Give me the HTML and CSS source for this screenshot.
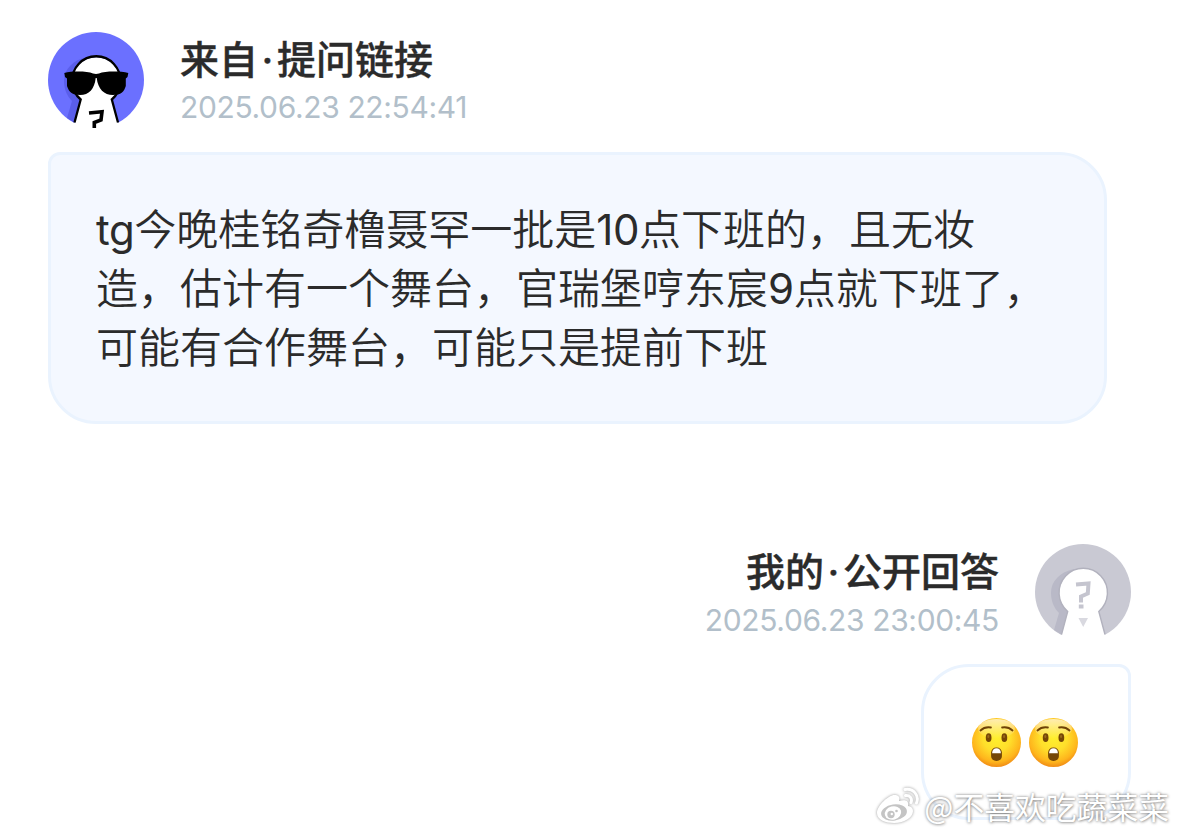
FILE: index.html
```html
<!DOCTYPE html>
<html lang="zh-CN">
<head>
    <meta charset="UTF-8">
    <meta name="viewport" content="width=device-width, initial-scale=1.0">
    <title>提问链接</title>
    <link rel="stylesheet" href="styles.css">
</head>
<body>
    <div class="page">
        <div class="message question">
            <div class="header">
                <svg class="avatar" viewBox="0 0 96 96">
                    <circle cx="48" cy="48" r="48" fill="#6b70ff"/>
                    <path d="M39 25C25 28 16 37 16 49C16 57 19 64 24 69L19 86L27 91L50 60Z" fill="#5a5eea"/>
                    <path d="M26.500 91L32.700 67.500A24 24 0 1 1 63.800 67.500L70 91L66 96H28Z" fill="#fff"/>
                    <path d="M26.500 90.500L32.700 67.500A24.200 24.500 0 1 1 63.800 67.500L70 90.500" fill="none" stroke="#000" stroke-width="2.300"/>
                    <path d="M16.300 41C24 39 39 39 45 41.500Q48 42.300 51 41.500C57 39 72 39 80.300 41L79.500 45L77.800 46.500V54C76 60 73 63 65 63C56 63 50 57 48.700 46H47.700C46.500 57 41 63 32 63C24 63 21 60 19 54V46.500L17 45Z" fill="#000"/>
                    <path d="M41 81L54 79.800L53 88L46.300 90.500V96" fill="none" stroke="#000" stroke-width="3.600"/>
                </svg>
                <div class="info">
                    <div class="name">来自<span class="dot">·</span>提问链接</div>
                    <div class="time">2025.06.23 22:54:41</div>
                </div>
            </div>
            <div class="bubble">
                <p><span class="latin">tg</span>今晚桂铭奇橹聂罕一批是<span class="latin">10</span>点下班的，且无妆<br>造，估计有一个舞台，官瑞堡哼东宸<span class="latin">9</span>点就下班了，<br>可能有合作舞台，可能只是提前下班</p>
            </div>
        </div>

        <div class="message answer">
            <div class="header">
                <div class="info">
                    <div class="name">我的<span class="dot">·</span>公开回答</div>
                    <div class="time">2025.06.23 23:00:45</div>
                </div>
                <svg class="avatar" viewBox="0 0 96 96">
                    <circle cx="48" cy="48" r="48" fill="#c9c9d3"/>
                    <path d="M39 25C25 28 16 37 16 49C16 57 19 64 24 69L19 86L27 91L50 60Z" fill="#b9b9c7"/>
                    <path d="M26.500 91L32.700 67.500A24 24.500 0 1 1 63.800 67.500L70 91L66 97H28Z" fill="#fff"/>
                    <path d="M26.500 90.500L32.700 67.500A24.200 24.500 0 1 1 63.800 67.500L70 90.500" fill="none" stroke="#b2b2be" stroke-width="1.400"/>
                    <path d="M41 40.500L53.500 39.500L52.800 49.500L46 52.500V58.500" fill="none" stroke="#c5c5cf" stroke-width="4"/>
                    <path d="M43.800 60.500H48.500V64.500H43.800Z" fill="#c5c5cf"/>
                    <path d="M43.500 74H53L48.200 83Z" fill="#d9d9e0"/>
                </svg>
            </div>
            <div class="bubble">
                <svg width="0" height="0" class="defs">
                    <defs>
                        <radialGradient id="skin" cx="0.5" cy="0.4" r="0.62">
                            <stop offset="0" stop-color="#fff02e"/>
                            <stop offset="0.45" stop-color="#ffdf2b"/>
                            <stop offset="0.8" stop-color="#feb51c"/>
                            <stop offset="1" stop-color="#ee8414"/>
                        </radialGradient>
                        <linearGradient id="shine" x1="0" y1="0" x2="0" y2="1">
                            <stop offset="0" stop-color="#fff" stop-opacity="0.65"/>
                            <stop offset="1" stop-color="#fff" stop-opacity="0"/>
                        </linearGradient>
                        <g id="astonished">
                            <circle cx="24" cy="24" r="24" fill="url(#skin)"/>
                            <ellipse cx="24" cy="10.500" rx="18" ry="9.500" fill="url(#shine)"/>
                            <path d="M8.300 12.200Q12.500 8.300 18.500 9.300M29.500 9.300Q35.500 8.300 39.700 12.200" fill="none" stroke="#6f4206" stroke-width="1.800" stroke-linecap="round"/>
                            <ellipse cx="16.300" cy="19.300" rx="2.800" ry="4.300" fill="#754706"/>
                            <ellipse cx="31.700" cy="19.300" rx="2.800" ry="4.300" fill="#754706"/>
                            <ellipse cx="16" cy="18" rx="1" ry="1.500" fill="#99691a"/>
                            <ellipse cx="31.400" cy="18" rx="1" ry="1.500" fill="#99691a"/>
                            <rect x="18.700" y="28.800" width="10.600" height="13.400" rx="5" fill="#754706"/>
                            <path d="M19.700 34.500C19.700 31.500 21.500 29.700 24 29.700S28.300 31.500 28.300 34.500Z" fill="#fff"/>
                        </g>
                    </defs>
                </svg>
                <svg class="emoji" viewBox="0 0 48 48" role="img" aria-label="😲"><use href="#astonished"/></svg>
                <svg class="emoji" viewBox="0 0 48 48" role="img" aria-label="😲"><use href="#astonished"/></svg>
            </div>
        </div>

        <div class="watermark">
            <svg class="weibo" viewBox="0 0 44 38">
                <path d="M19 8C14 7 1 18 1 26C1 33 10 36 18 36C29 36 37 30 37 24C37 21 35 19.500 32 19C33 14 30 12 23 14C24.500 10 22 8 19 8Z" fill="#fff"/>
                <ellipse cx="18" cy="25.500" rx="13" ry="8" transform="rotate(-8 18 25.500)" fill="#c4c4c4"/>
                <ellipse cx="17" cy="26" rx="8.300" ry="6.700" transform="rotate(-15 17 26)" fill="#fff"/>
                <circle cx="15" cy="27.500" r="3.700" fill="#c4c4c4"/>
                <circle cx="20.500" cy="24" r="1.300" fill="#c4c4c4"/>
                <circle cx="15.800" cy="27" r="1.200" fill="#fff"/>
                <path d="M29.500 8.500C34 8 36.500 11.500 35 15.500M29 2.500C37.500 1 43.500 8.500 40.500 16" fill="none" stroke="#fff" stroke-width="3" stroke-linecap="round"/>
            </svg>
            <span>@不喜欢吃蔬菜菜</span>
        </div>
    </div>
</body>
</html>
```

FILE: styles.css
```css
* {
    box-sizing: border-box;
}
body {
    margin: 0;
    background-color: #fff;
    color: #2b2b2b;
    font-family: Inter, "Noto Sans CJK SC", sans-serif;
}
.page {
    position: relative;
    width: 1179px;
    height: 836px;
    padding: 32px 48px 0;
    overflow: hidden;
}
.message {
    display: flex;
    flex-direction: column;
    align-items: flex-start;
}
.header {
    display: flex;
    gap: 36px;
}
.avatar {
    display: block;
    width: 96px;
    height: 96px;
}
.name {
    height: 56px;
    font-size: 39px;
    font-weight: 500;
    line-height: 55px;
    white-space: nowrap;
    -webkit-text-stroke: 0.4px #2b2b2b;
}
.dot {
    display: inline-block;
    width: 19px;
    text-align: center;
}
.time {
    color: #b2bfca;
    font-size: 30px;
    letter-spacing: -0.35px;
    line-height: 38px;
    white-space: nowrap;
}
.answer .time {
    line-height: 40px;
}
.bubble {
    margin-top: 24px;
    border: 3px solid #eaf3fe;
    border-radius: 48px;
}
.question .bubble {
    width: 1059px;
    height: 272px;
    padding: 45px 45px;
    background-color: #f4f8ff;
    border-top-left-radius: 12px;
}
.bubble p {
    margin: 0;
    font-size: 42px;
    font-weight: 350;
    line-height: 59px;
    white-space: nowrap;
}
.latin {
    font-weight: 400;
    letter-spacing: -0.4px;
}
.answer {
    align-items: flex-end;
    margin-top: 120px;
}
.answer .info {
    text-align: right;
}
.answer .bubble {
    display: flex;
    gap: 8px;
    width: 210px;
    height: 156px;
    padding: 51px 48px;
    border-top-right-radius: 12px;
}
.defs {
    position: absolute;
}
.emoji {
    flex: none;
    width: 49px;
    height: 49px;
}
.watermark {
    position: absolute;
    right: 10px;
    bottom: 8px;
    display: flex;
    align-items: center;
    gap: 4px;
    color: #fff;
    font-family: "Noto Sans CJK SC", sans-serif;
    font-size: 30.8px;
    line-height: 44px;
    text-shadow: 0 0 3px rgba(0, 0, 0, 0.5), 1px 1px 3px rgba(0, 0, 0, 0.2);
    white-space: nowrap;
}
.weibo {
    width: 44px;
    height: 38px;
    filter: drop-shadow(0 0 1.5px rgba(0, 0, 0, 0.4));
}
```
